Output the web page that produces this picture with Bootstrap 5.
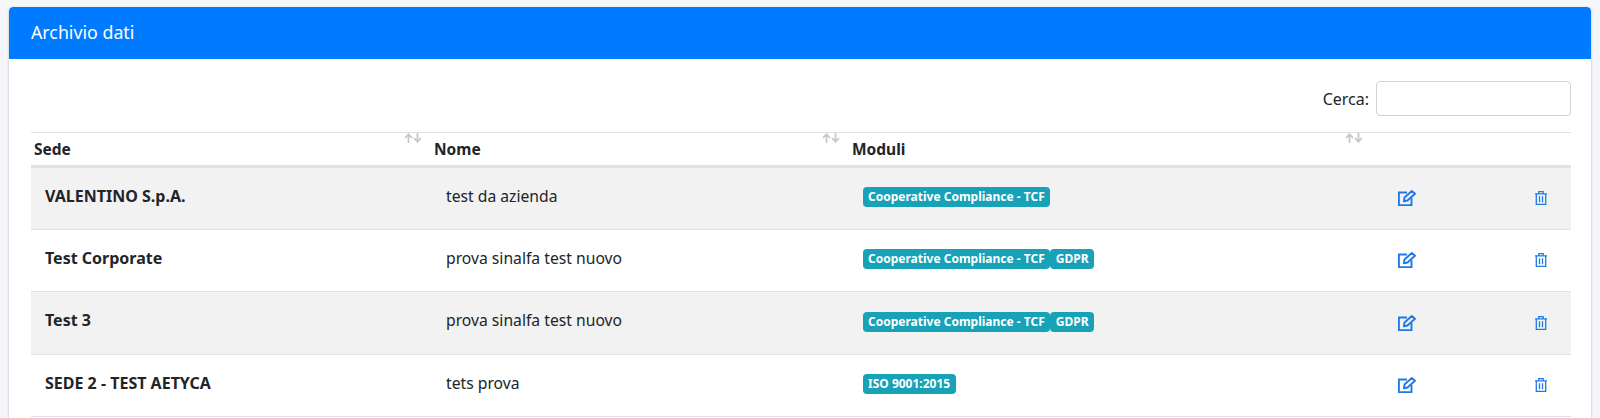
<!DOCTYPE html>
<html lang="it">
<head>
<meta charset="utf-8">
<title>Archivio dati</title>
<link rel="stylesheet" href="https://cdn.jsdelivr.net/npm/bootstrap@5.3.0/dist/css/bootstrap.min.css">
<style>
html,body{height:418px;overflow:hidden}
body{background:#f4f6f9;font-family:"Noto Sans","Lato",sans-serif;font-size:15.700px;color:#212529;padding:7px 9px 0}
.arch-card{border:0;border-radius:4px 4px 0 0;box-shadow:0 0 1px rgba(0,0,0,.13),0 1px 3px rgba(0,0,0,.2);background:#fff;height:411px;overflow:hidden}
.arch-head{background:#007bff;color:#fff;height:52px;padding:0 22px 2px;display:flex;align-items:center;font-size:17.800px;border:0;border-radius:4px 4px 0 0!important}
.arch-body{padding:22px 20px 0 22px}
.arch-search{height:35px;margin-bottom:16px}
.arch-search label{font-size:16px}
.arch-search input{width:195px;height:35px;border:1px solid #ced4da;border-radius:4px;margin-left:7px;background:#fff}
.arch-table{table-layout:fixed;width:1540px;margin:0;border-collapse:collapse}
.arch-table th{position:relative;padding:5px 3px 6px;border-top:1px solid #dee2e6;border-bottom:3px solid #dee2e6;font-weight:700;font-size:15.500px;height:34px;vertical-align:bottom;line-height:20px;background:#fff}
.arch-table td{height:62.500px;padding:0 14px 5px;vertical-align:middle;border-bottom:1px solid #dee2e6;background:#fff;line-height:20px}
.arch-table td b{font-size:16px}
.arch-table tr.arch-odd td{background:#f2f2f2}
.sort-arrows{position:absolute;top:0;right:9px;display:block;color:#c8c9ca}
.arch-table td.cell-tags{padding:0 13.500px 4px}
.arch-tag{display:inline-block;background:#17a2b8;color:#fff;font-size:12px;font-weight:700;line-height:20px;height:20px;padding:0 5.500px;border-radius:4px;vertical-align:middle}
.arch-ico{display:block;color:#1f7ae8}
.arch-table td.cell-edit{padding:0 0 0 26px}
.arch-table td.cell-del{padding:0 0 0 23px}
.arch-table td.arch-nome{padding-left:15px}
</style>
</head>
<body>
<svg width="0" height="0" class="d-none">
  <symbol id="i-sort" viewBox="0 0 18 10"><path d="M4.500 10V1.500M1 5l3.500-3.800L8 5M13.500 0v8.500M10 5l3.500 3.800L17 5" fill="none" stroke="currentColor" stroke-width="1.800"/></symbol>
  <symbol id="i-edit" viewBox="0 0 18 16"><g fill="none" stroke="currentColor" stroke-width="1.900"><path d="M9 2.500H.9v12.600h12.600V8"/><path d="M6.500 7.500 13.800 1 17 3.800 9.500 10.500l-3.600.8z" stroke-linejoin="round"/></g></symbol>
  <symbol id="i-del" viewBox="0 0 12 14"><path d="M0 2.800h12M3.800 2.600V.7h4.400v1.900M1.300 3v10.300h9.400V3M4.500 5.200v6M7.500 5.200v6" fill="none" stroke="currentColor" stroke-width="1.300"/></symbol>
</svg>
<div class="card arch-card">
  <div class="card-header arch-head">Archivio dati</div>
  <div class="card-body arch-body">
    <div class="d-flex justify-content-end align-items-center arch-search">
      <label for="cerca">Cerca:</label><input id="cerca" type="search">
    </div>
    <table class="table arch-table">
      <colgroup><col style="width:400px"><col style="width:418px"><col style="width:523px"><col style="width:140px"><col style="width:59px"></colgroup>
      <thead>
        <tr>
          <th>Sede<svg class="sort-arrows" width="18" height="10"><use href="#i-sort"/></svg></th>
          <th>Nome<svg class="sort-arrows" width="18" height="10"><use href="#i-sort"/></svg></th>
          <th>Moduli<svg class="sort-arrows" width="18" height="10"><use href="#i-sort"/></svg></th>
          <th></th>
          <th></th>
        </tr>
      </thead>
      <tbody>
        <tr class="arch-odd">
          <td><b>VALENTINO S.p.A.</b></td>
          <td class="arch-nome">test da azienda</td>
          <td class="cell-tags"><span class="arch-tag">Cooperative Compliance - TCF</span></td>
          <td class="cell-edit"><svg class="arch-ico" width="18" height="16"><use href="#i-edit"/></svg></td>
          <td class="cell-del"><svg class="arch-ico" width="12" height="14"><use href="#i-del"/></svg></td>
        </tr>
        <tr>
          <td><b>Test Corporate</b></td>
          <td class="arch-nome">prova sinalfa test nuovo</td>
          <td class="cell-tags"><span class="arch-tag">Cooperative Compliance - TCF</span><span class="arch-tag">GDPR</span></td>
          <td class="cell-edit"><svg class="arch-ico" width="18" height="16"><use href="#i-edit"/></svg></td>
          <td class="cell-del"><svg class="arch-ico" width="12" height="14"><use href="#i-del"/></svg></td>
        </tr>
        <tr class="arch-odd">
          <td><b>Test 3</b></td>
          <td class="arch-nome">prova sinalfa test nuovo</td>
          <td class="cell-tags"><span class="arch-tag">Cooperative Compliance - TCF</span><span class="arch-tag">GDPR</span></td>
          <td class="cell-edit"><svg class="arch-ico" width="18" height="16"><use href="#i-edit"/></svg></td>
          <td class="cell-del"><svg class="arch-ico" width="12" height="14"><use href="#i-del"/></svg></td>
        </tr>
        <tr>
          <td><b>SEDE 2 - TEST AETYCA</b></td>
          <td class="arch-nome">tets prova</td>
          <td class="cell-tags"><span class="arch-tag">ISO 9001:2015</span></td>
          <td class="cell-edit"><svg class="arch-ico" width="18" height="16"><use href="#i-edit"/></svg></td>
          <td class="cell-del"><svg class="arch-ico" width="12" height="14"><use href="#i-del"/></svg></td>
        </tr>
      </tbody>
    </table>
  </div>
</div>
<script src="https://cdn.jsdelivr.net/npm/bootstrap@5.3.0/dist/js/bootstrap.bundle.min.js"></script>
</body>
</html>
